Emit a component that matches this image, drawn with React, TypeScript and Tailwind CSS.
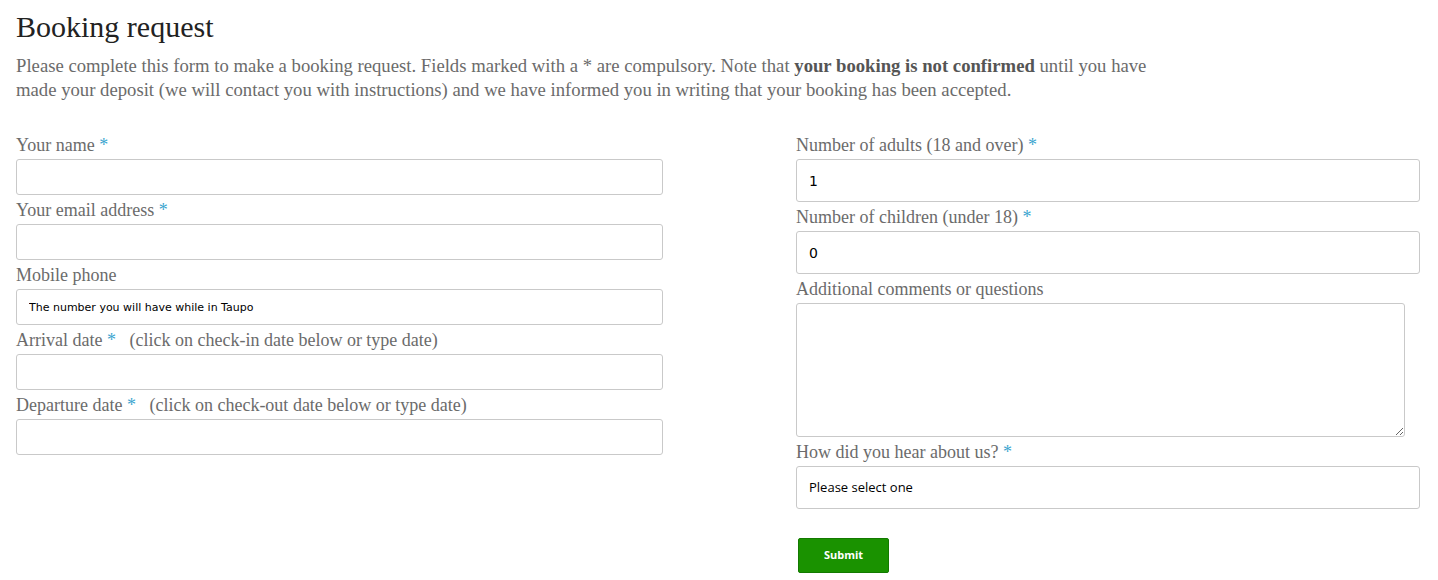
import React from 'react';

const serif = { fontFamily: '"Liberation Serif", "DejaVu Serif", serif' };

function Star() {
  return <span className="text-[#3ba5cf]"> *</span>;
}

function Label({ children }: { children: React.ReactNode }) {
  return (
    <label className="block pt-[4px] pb-[3px] text-[18px] leading-[22px] text-[#6b6b6b]" style={serif}>
      {children}
    </label>
  );
}

export default function App() {
  return (
    <div className="min-h-[580px] bg-white pl-4 pt-[8px]">
      <h1 className="text-[30px] leading-[38px] text-[#222]" style={serif}>Booking request</h1>
      <p className="mt-[8px] text-[18.7px] leading-[24px] text-[#6b6b6b]" style={serif}>
        Please complete this form to make a booking request. Fields marked with a * are compulsory. Note that{' '}
        <b className="text-[#555]">your booking is not confirmed</b> until you have
        <br />
        made your deposit (we will contact you with instructions) and we have informed you in writing that your booking has been accepted.
      </p>

      <div className="mt-[28px] flex">
        <div className="w-[647px]">
          <Label>Your name<Star /></Label>
          <input className="block h-[36px] w-full rounded-[3px] border border-[#c9c9c9]" />
          <Label>Your email address<Star /></Label>
          <input className="block h-[36px] w-full rounded-[3px] border border-[#c9c9c9]" />
          <Label>Mobile phone</Label>
          <input
            defaultValue="The number you will have while in Taupo"
            className="block h-[36px] w-full rounded-[3px] border border-[#c9c9c9] px-3 text-[11px] text-black"
            style={{ fontFamily: '"DejaVu Sans", Verdana, sans-serif' }}
          />
          <Label>Arrival date<Star /> &nbsp; (click on check-in date below or type date)</Label>
          <input className="block h-[36px] w-full rounded-[3px] border border-[#c9c9c9]" />
          <Label>Departure date<Star /> &nbsp; (click on check-out date below or type date)</Label>
          <input className="block h-[36px] w-full rounded-[3px] border border-[#c9c9c9]" />
        </div>

        <div className="ml-[133px] w-[624px]">
          <Label>Number of adults (18 and over)<Star /></Label>
          <input
            defaultValue="1"
            className="block h-[43px] w-full rounded-[3px] border border-[#c9c9c9] px-3 text-[14px] text-black"
            style={{ fontFamily: '"DejaVu Sans", Verdana, sans-serif' }}
          />
          <Label>Number of children (under 18)<Star /></Label>
          <input
            defaultValue="0"
            className="block h-[43px] w-full rounded-[3px] border border-[#c9c9c9] px-3 text-[14px] text-black"
            style={{ fontFamily: '"DejaVu Sans", Verdana, sans-serif' }}
          />
          <Label>Additional comments or questions</Label>
          <textarea className="block h-[134px] w-[609px] rounded-[3px] border border-[#c9c9c9]" />
          <Label>How did you hear about us?<Star /></Label>
          <div
            className="flex h-[43px] w-full items-center rounded-[3px] border border-[#c9c9c9] px-3 text-[13px] text-black"
            style={{ fontFamily: '"Open Sans", sans-serif' }}
          >
            Please select one
          </div>
          <button
            className="mt-[29px] ml-[2px] h-[35px] w-[91px] rounded-[2px] border border-[#137a00] bg-[#1a9200] text-[11px] font-bold text-white"
            style={{ fontFamily: '"Open Sans", sans-serif' }}
          >
            Submit
          </button>
        </div>
      </div>
    </div>
  );
}
